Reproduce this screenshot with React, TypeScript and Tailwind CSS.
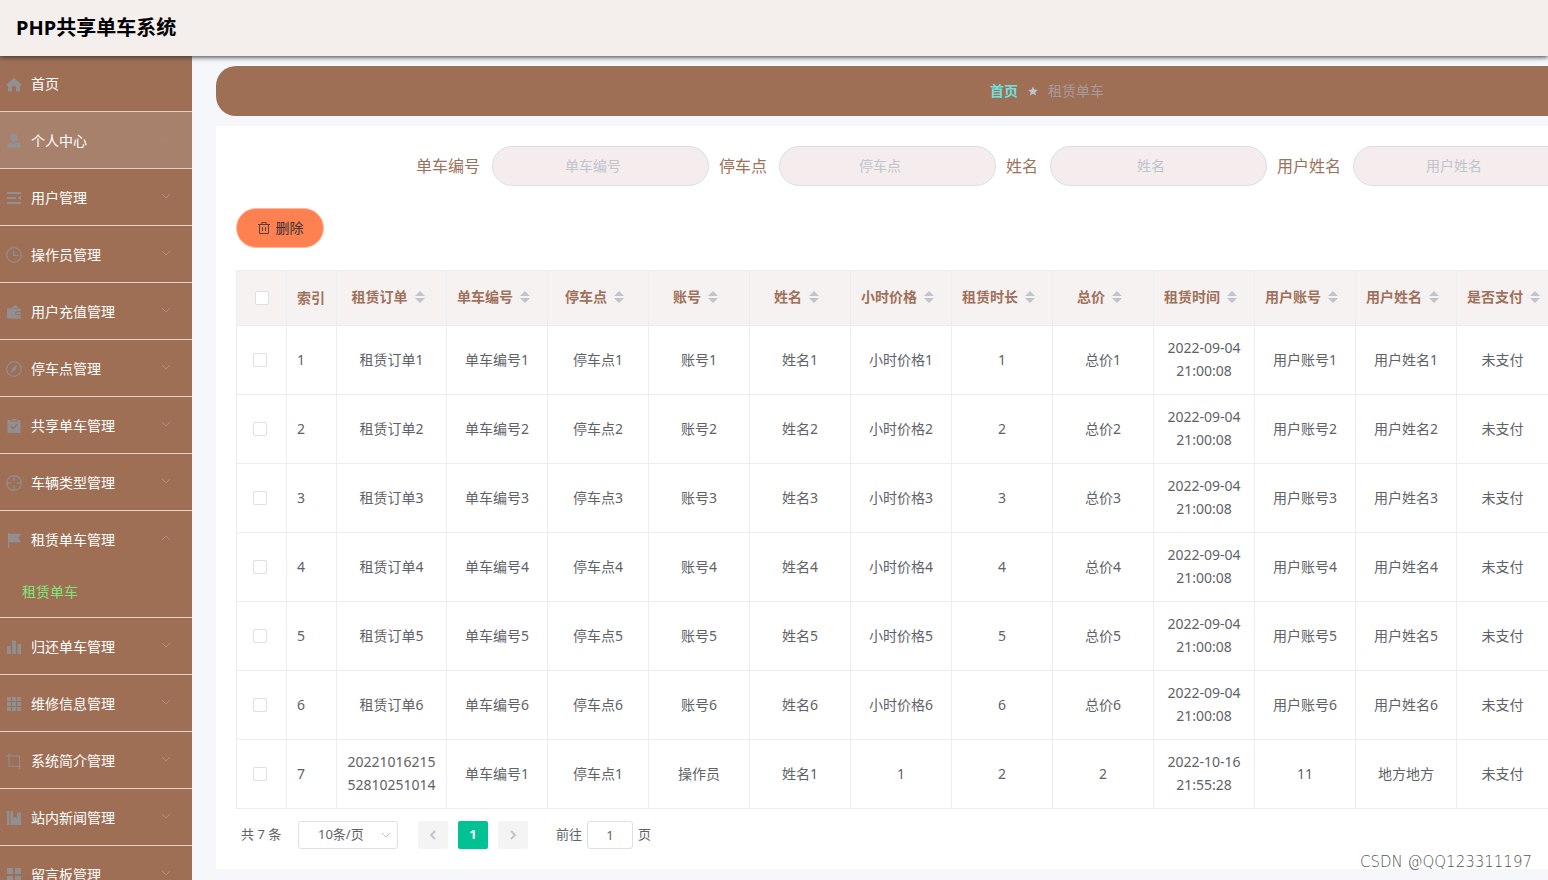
import { ReactNode } from 'react';
import clsx from 'clsx';

interface MenuItem {
  label: string;
  icon: ReactNode;
  hovered?: boolean;
  children?: string[];
}

// Menu glyphs, all drawn on an 18x18 grid
const icons = {
  home: <path fill="currentColor" d="M9 2.800 1.600 9.200v1.300q0 .3.400.3h1V16q0 .5.500.5H7v-3.800a2 2 0 0 1 4 0v3.800h3.500q.5 0 .5-.5v-5.200h1q.4 0 .4-.3V9.200z" />,
  user: (
    <g fill="currentColor">
      <ellipse cx="9" cy="6" rx="3.600" ry="4.200" />
      <path d="M1.800 15.500c0-3 2-4.500 5-4.900l2.200.8 2.200-.8c3 .4 5 1.900 5 4.900z" />
    </g>
  ),
  list: (
    <g fill="currentColor">
      <path d="M2 3h14v2H2zM2 8h9v2H2zM2 13h14v2H2zM16 6.600v4.700L12.600 9z" />
    </g>
  ),
  clock: (
    <g fill="none" stroke="currentColor" strokeWidth="1.200">
      <circle cx="9" cy="9" r="7.300" />
      <path d="M8.800 4.500v5h4.700" />
    </g>
  ),
  wallet: (
    <g fill="currentColor">
      <path d="M10.500 1.800 13.400 5H6z" />
      <path d="M2 5.600h13.800v2.700h-3.600a2 2 0 0 0 0 4h3.600v3.200H2z" />
      <path d="M12.300 9.300H16v2h-3.700a1 1 0 0 1 0-2z" />
    </g>
  ),
  compass: (
    <g>
      <circle cx="9" cy="9" r="7.300" fill="none" stroke="currentColor" strokeWidth="1.200" />
      <path fill="currentColor" d="m12 4.800-1.500 5.100L6 13.200l1.500-5.100z" />
    </g>
  ),
  claim: (
    <path
      fill="currentColor"
      fillRule="evenodd"
      d="M2.500 3h3v1.500h7V3h3v13h-13zM6.500 2h5v1.500h-5zM5.200 9.400l3 3L13 7.600l-.9-.9-3.900 3.900-2.100-2.100z"
    />
  ),
  aim: (
    <g fill="none" stroke="currentColor" strokeWidth="1.200">
      <circle cx="9" cy="9" r="7.300" />
      <path d="M9 1.700v5M9 11.300v5M1.700 9h5M11.300 9h5" />
    </g>
  ),
  flag: <path fill="currentColor" d="M3 2h1.200v.8H16L13.300 7l2.700 4.200H4.200V17H3z" />,
  chart: <path fill="currentColor" d="M2 8h3.700v8H2zM7.200 2.500h3.700V16H7.200zM12.400 6h3.700v10h-3.700z" />,
  grid: (
    <path
      fill="currentColor"
      d="M2 2h4v4H2zM7 2h4v4H7zM12 2h4v4h-4zM2 7h4v4H2zM7 7h4v4H7zM12 7h4v4h-4zM2 12h4v4H2zM7 12h4v4H7zM12 12h4v4h-4z"
    />
  ),
  crop: <path fill="none" stroke="currentColor" strokeWidth="1.100" d="M1 4h13.500v13M4 1.500v12.700h12.500" />,
  news: <path fill="currentColor" d="M2 2h2.500v14H2zM5.500 2H8v7.500l2-1.500 2 1.500V3.500h4V16H5.500z" />,
  menu: <path fill="currentColor" d="M2 2h6v6H2zM10 2h6v6h-6zM2 10h6v6H2zM10 10h6v6h-6z" />,
};

const menu: MenuItem[] = [
  { label: '个人中心', icon: icons.user, hovered: true },
  { label: '用户管理', icon: icons.list },
  { label: '操作员管理', icon: icons.clock },
  { label: '用户充值管理', icon: icons.wallet },
  { label: '停车点管理', icon: icons.compass },
  { label: '共享单车管理', icon: icons.claim },
  { label: '车辆类型管理', icon: icons.aim },
  { label: '租赁单车管理', icon: icons.flag, children: ['租赁单车'] },
  { label: '归还单车管理', icon: icons.chart },
  { label: '维修信息管理', icon: icons.grid },
  { label: '系统简介管理', icon: icons.crop },
  { label: '站内新闻管理', icon: icons.news },
  { label: '留言板管理', icon: icons.menu },
];

const filters = ['单车编号', '停车点', '姓名', '用户姓名'];

const columns = [
  { title: '租赁订单', width: 'w-[110px]' },
  { title: '单车编号', width: 'w-[101px]' },
  { title: '停车点', width: 'w-[101px]' },
  { title: '账号', width: 'w-[101px]' },
  { title: '姓名', width: 'w-[101px]' },
  { title: '小时价格', width: 'w-[101px]' },
  { title: '租赁时长', width: 'w-[101px]' },
  { title: '总价', width: 'w-[101px]' },
  { title: '租赁时间', width: 'w-[101px]' },
  { title: '用户账号', width: 'w-[101px]' },
  { title: '用户姓名', width: 'w-[101px]' },
  { title: '是否支付', width: 'w-[91px]' },
];

const rows: string[][] = [
  ...[1, 2, 3, 4, 5, 6].map((n) => [
    `租赁订单${n}`,
    `单车编号${n}`,
    `停车点${n}`,
    `账号${n}`,
    `姓名${n}`,
    `小时价格${n}`,
    `${n}`,
    `总价${n}`,
    '2022-09-04 21:00:08',
    `用户账号${n}`,
    `用户姓名${n}`,
    '未支付',
  ]),
  ['2022101621552810251014', '单车编号1', '停车点1', '操作员', '姓名1', '1', '2', '2', '2022-10-16 21:55:28', '11', '地方地方', '未支付'],
];

function MenuIcon({ children }: { children: ReactNode }) {
  return (
    <span className="mr-[5px] flex w-6 shrink-0 justify-center text-[#909399]">
      <svg viewBox="0 0 18 18" className="h-[18px] w-[18px] opacity-90">
        {children}
      </svg>
    </span>
  );
}

function Chevron({ className }: { className?: string }) {
  return (
    <svg viewBox="0 0 12 12" className={clsx('h-3 w-3', className)} fill="none" stroke="currentColor">
      <path d="m2 4 4 4 4-4" />
    </svg>
  );
}

function Sidebar() {
  return (
    <nav className="w-48 shrink-0 overflow-hidden bg-[#9e6f55] text-sm text-white">
      <a href="#home" className="flex h-14 items-center border-b border-[#e6d2c8] pl-0.5">
        <MenuIcon>{icons.home}</MenuIcon>
        首页
      </a>
      {menu.map((item) => (
        <div key={item.label} className={clsx('border-b border-[#e6d2c8]', item.hovered && 'bg-[#a8816c]')}>
          <button type="button" className="flex h-14 w-full items-center pl-0.5 pr-5 pt-0.5 text-left">
            <MenuIcon>{item.icon}</MenuIcon>
            <span>{item.label}</span>
            <Chevron
              className={clsx(
                '-mt-1 ml-auto',
                item.children && 'rotate-180',
                item.hovered ? 'text-[#a0877a]' : 'text-[#ab9082]',
              )}
            />
          </button>
          {item.children?.map((child) => (
            <a key={child} href="#rent" className="flex h-[50px] items-center pl-[22px] text-[#7fe67a]">
              {child}
            </a>
          ))}
        </div>
      ))}
    </nav>
  );
}

function SortCaret() {
  return (
    <svg viewBox="0 0 10 12" className="mx-[7px] h-3 w-2.5 shrink-0 text-[#c0c4cc]" fill="currentColor">
      <path d="M5 0 10 5H0zM5 12l5-5H0z" />
    </svg>
  );
}

function Checkbox({ label }: { label: string }) {
  return (
    <input
      type="checkbox"
      aria-label={label}
      className="block h-3.5 w-3.5 appearance-none rounded-xs border border-[#dcdfe6] bg-white checked:bg-[#00c292]"
    />
  );
}

function SearchForm() {
  return (
    <form className="flex gap-2.5 pl-[180px]">
      {filters.map((name) => (
        <label key={name} className="flex shrink-0 items-center gap-3 text-base text-[#9e7159]">
          {name}
          <input
            type="text"
            placeholder={name}
            className="h-10 w-[217px] rounded-full border border-[#dcdfe6] bg-[#f5eced] pb-0.5 pl-[15px] pr-[30px] text-center text-sm outline-none placeholder:text-[#c0c4cc]"
          />
        </label>
      ))}
    </form>
  );
}

function OrderTable() {
  return (
    <table className="mt-[22px] w-0 table-fixed border-separate border-spacing-0 border-l border-t border-[#ebeef0] text-sm text-[#606266]">
      <colgroup>
        <col className="w-[50px]" />
        <col className="w-[50px]" />
        {columns.map((col) => (
          <col key={col.title} className={col.width} />
        ))}
      </colgroup>
      <thead className="bg-[#f6f2f1] text-[#a0715a]">
        <tr className="h-[55px]">
          <th className="border-b border-r border-[#ebeef0] pl-[18px]">
            <Checkbox label="全选" />
          </th>
          <th className="whitespace-nowrap border-b border-r border-[#ebeef0] pl-2.5 text-left font-bold">索引</th>
          {columns.map((col) => (
            <th key={col.title} className="border-b border-r border-[#ebeef0] px-2.5 pb-0.5 font-bold last:border-r-0">
              <div className="flex min-w-max items-center justify-center whitespace-nowrap">
                {col.title}
                <SortCaret />
              </div>
            </th>
          ))}
        </tr>
      </thead>
      <tbody>
        {rows.map((row, i) => (
          <tr key={i} className="h-[69px]">
            <td className="border-b border-r border-[#ebeef0] pl-4">
              <Checkbox label={`${i + 1}`} />
            </td>
            <td className="border-b border-r border-[#ebeef0] pl-2.5">{i + 1}</td>
            {row.map((cell, j) => (
              <td
                key={j}
                className="break-all border-b border-r border-[#ebeef0] px-2.5 pb-0.5 text-center leading-[23px] last:border-r-0"
              >
                {cell}
              </td>
            ))}
          </tr>
        ))}
      </tbody>
    </table>
  );
}

function Pagination() {
  return (
    <div className="mt-3 flex h-7 items-center pl-[5px] text-[13px] text-[#606266]">
      <span className="w-[57px]">共 7 条</span>
      <div className="relative">
        <select
          aria-label="每页条数"
          className="block h-7 w-[100px] appearance-none rounded-[3px] border border-[#dcdfe6] bg-white pl-[19px] outline-none"
        >
          <option>10条/页</option>
        </select>
        <Chevron className="pointer-events-none absolute right-1.5 top-2 text-[#c0c4cc]" />
      </div>
      <div className="ml-5 flex gap-2.5">
        <button type="button" aria-label="上一页" className="flex h-7 w-[30px] items-center justify-center rounded-xs bg-[#f4f4f5] text-[#c0c4cc]">
          <Chevron className="rotate-90 stroke-2" />
        </button>
        <button type="button" className="h-7 w-[30px] rounded-xs bg-[#00c292] font-bold text-white">
          1
        </button>
        <button type="button" aria-label="下一页" className="flex h-7 w-[30px] items-center justify-center rounded-xs bg-[#f4f4f5] text-[#c0c4cc]">
          <Chevron className="-rotate-90 stroke-2" />
        </button>
      </div>
      <label className="ml-7 flex items-center gap-[5px]">
        前往
        <input
          type="text"
          defaultValue="1"
          className="h-7 w-[46px] rounded-[3px] border border-[#dcdfe6] text-center outline-none"
        />
        页
      </label>
    </div>
  );
}

export default function App() {
  return (
    <div className="relative flex h-screen flex-col overflow-hidden bg-[#f5f7fa] font-['Noto_Sans','Noto_Sans_CJK_SC',sans-serif]">
      <header className="z-10 flex h-14 shrink-0 items-center bg-[#f4eeed] px-4 shadow-[0_1px_5px_#333]">
        <h1 className="text-xl font-bold text-black">PHP共享单车系统</h1>
      </header>

      <div className="flex min-h-0 flex-1">
        <Sidebar />
        <main className="min-w-0 flex-1 overflow-hidden pl-6 pt-2.5">
          {/* Content is wider than the viewport, the rest is clipped */}
          <div className="min-w-[1662px]">
            <div className="flex h-[50px] items-center justify-center gap-2.5 rounded-[20px] bg-[#9e6f55] text-sm">
              <a href="#home" className="font-bold text-[#6fe0e0]">
                首页
              </a>
              <svg viewBox="0 0 24 24" className="h-2.5 w-2.5 text-[#c0c4cc]" fill="currentColor">
                <path d="m12 1 3.300 7.600 8.200.7-6.200 5.400 1.900 8.100L12 18.500l-7.200 4.300 1.900-8.100L.5 9.300l8.200-.7z" />
              </svg>
              <span className="text-[#a99a9e]">租赁单车</span>
            </div>

            <div className="mt-2.5 bg-white p-5">
              <SearchForm />
              <button
                type="button"
                className="mt-[22px] flex h-10 w-[88px] items-center justify-center gap-[5px] rounded-full border border-[#ffb9a0] bg-[#ff8050] text-sm text-[#333]"
              >
                <svg viewBox="0 0 14 14" className="h-3.5 w-3.5 opacity-80" fill="none" stroke="currentColor">
                  <path d="M1 3.500h12M2.500 3.500v9h9v-9M4.800 3.500v-2h4.400v2M5.500 6v4M8.500 6v4" />
                </svg>
                删除
              </button>
              <OrderTable />
              <Pagination />
            </div>
          </div>
        </main>
      </div>

      <span className="absolute bottom-2 right-4 font-['DejaVu_Sans',sans-serif] text-[15px] font-extralight leading-5 text-[#555]">
        CSDN @QQ123311197
      </span>
    </div>
  );
}
